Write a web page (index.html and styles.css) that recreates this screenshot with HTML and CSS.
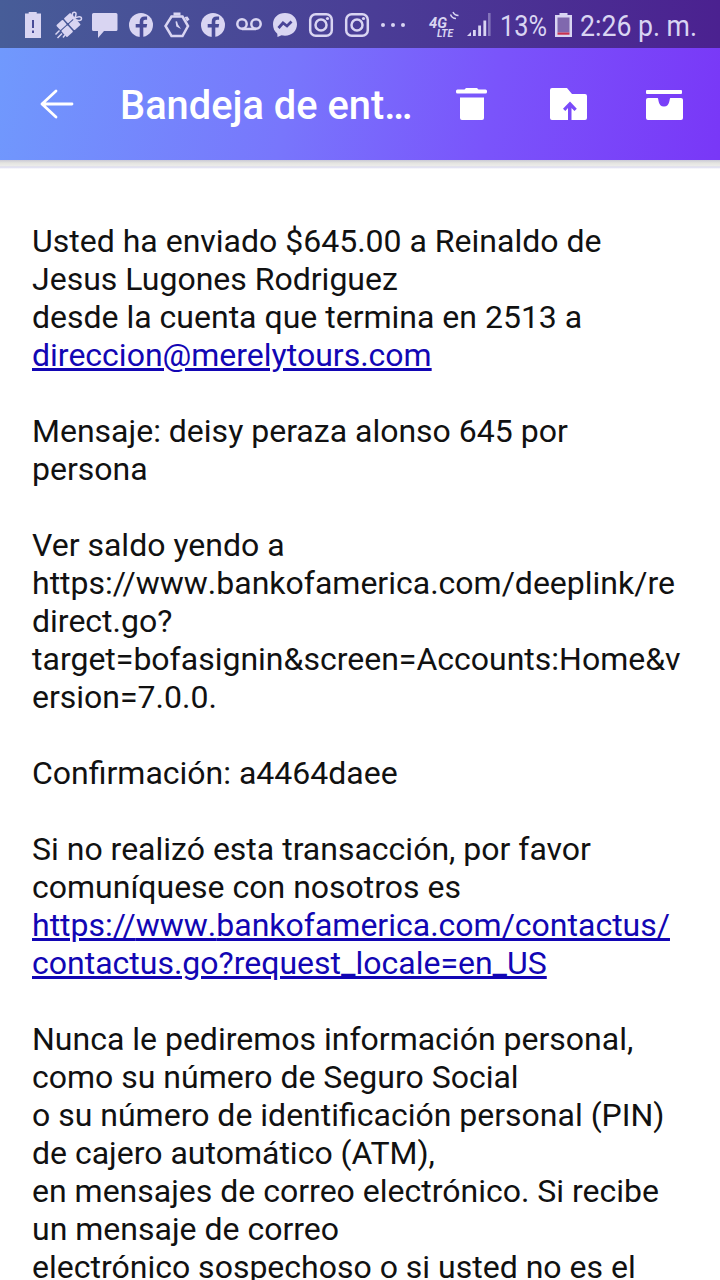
FILE: index.html
```html
<!DOCTYPE html>
<html lang="es">
<head>
  <meta charset="UTF-8">
  <meta name="viewport" content="width=device-width, initial-scale=1.0">
  <title>Bandeja de entrada</title>
  <link rel="stylesheet" href="styles.css">
</head>
<body>
  <svg class="defs" width="0" height="0">
    <symbol id="facebook" viewBox="0 0 36 48">
      <circle cx="18" cy="25" r="12" fill="currentColor"/>
      <path class="cut" d="M16.7 37.5V27.5h-4v-3.4h4v-2.4c0-3.5 1.8-5.2 5-5.2h2.4v3.3h-1.8c-1.5 0-2 .7-2 2v2.3h3.9l-.7 3.4h-3.2v10z"/>
    </symbol>
    <symbol id="instagram" viewBox="0 0 36 48">
      <rect class="line" x="7.2" y="14.2" width="21.6" height="21.6" rx="5.5"/>
      <circle class="line" cx="18" cy="25" r="5.5"/>
      <circle cx="24.5" cy="18.5" r="1.6" fill="currentColor"/>
    </symbol>
  </svg>

  <div class="status-bar">
    <div class="notifications">
      <svg viewBox="0 0 36 48">
        <path fill="currentColor" d="M10 13.5h3.7V12h8v1.5H26V38H10z"/>
        <path class="cut" d="M17 20h2v8h-2zM17 30.5h2v2.5h-2z"/>
      </svg>
      <svg viewBox="0 0 36 48">
        <g transform="rotate(-42 17.5 25)" fill="currentColor">
          <rect x="8" y="17" width="8.7" height="6.5" rx="1"/>
          <rect x="18.2" y="17" width="8.7" height="6.5" rx="1"/>
          <rect x="8" y="24.5" width="8.7" height="8.5" rx="1"/>
          <rect x="18.2" y="24.5" width="8.7" height="8.5" rx="1"/>
        </g>
        <path class="thin" d="M23 19c-2.500-3.500-2-6.800.3-6.800 2.500 0 2.200 3.500-.3 6.800zM23 19c3.500-3 7.500-3 7.500-.5 0 2.600-4 2.800-7.500.5zM4.500 34.500l4-4M6.500 38l4.500-4.500M12 37.500l2-2.500"/>
      </svg>
      <svg viewBox="0 0 36 48">
        <path fill="currentColor" d="M6.500 13h22.500q1.500 0 1.500 1.500v15q0 1.500-1.500 1.500H17l-6 7v-7H6.500Q5 31 5 29.500v-15Q5 13 6.500 13z"/>
      </svg>
      <svg><use href="#facebook"/></svg>
      <svg viewBox="0 0 36 48">
        <path class="line" d="M12.500 16.500h11l5.500 9.500-5.500 10h-11L6.500 26z"/>
        <path fill="currentColor" d="M14.500 12.500h7v3h-7zM25.500 17l3-.5 2 3-2.500 2zM16.500 21.500l1.500-.2 1 3.200 3 4.500-4.700-2.500z"/>
      </svg>
      <svg><use href="#facebook"/></svg>
      <svg viewBox="0 0 36 48">
        <circle class="line" cx="11" cy="24" r="4.7"/>
        <circle class="line" cx="25" cy="24" r="4.7"/>
        <path class="line" d="M11 29h14"/>
      </svg>
      <svg viewBox="0 0 36 48">
        <path fill="currentColor" d="M18 13c7 0 12 4.800 12 11.300S25 35.700 18 35.700c-1.300 0-2.400-.2-3.500-.5L10.500 37l-.2-3.300C7.500 31.500 6 28.300 6 24.300 6 17.800 11 13 18 13z"/>
        <path class="cut-line" d="M11.500 28l4.500-5 4 3 4.500-4.500"/>
      </svg>
      <svg><use href="#instagram"/></svg>
      <svg><use href="#instagram"/></svg>
      <svg viewBox="0 0 36 48">
        <g fill="currentColor">
          <circle cx="8" cy="25" r="2"/>
          <circle cx="18" cy="25" r="2"/>
          <circle cx="28" cy="25" r="2"/>
        </g>
      </svg>
    </div>
    <div class="system">
      <svg class="network" viewBox="0 0 36 48">
        <text class="net-4g" x="-1" y="28" textLength="18" lengthAdjust="spacingAndGlyphs">4G</text>
        <text class="net-lte" x="7" y="37" textLength="16" lengthAdjust="spacingAndGlyphs">LTE</text>
        <path class="thin" d="M20.500 14.500q1.500 4 5.500 4M23 12q1.500 3.500 5.500 3.500"/>
      </svg>
      <svg class="signal" viewBox="0 0 28 48">
        <path fill="currentColor" d="M1 36l4-4v4zM7 30h2.800v6H7zM12.200 25.500H15V36h-2.800zM17.400 20.500h2.800V36h-2.800z"/>
        <path fill="currentColor" opacity=".4" d="M22 13h2.600v23H22z"/>
      </svg>
      <svg class="percent" viewBox="0 0 60 48">
        <text class="clock" x="6" y="36" textLength="47" lengthAdjust="spacingAndGlyphs">13%</text>
      </svg>
      <svg class="battery" viewBox="0 0 20 48">
        <path fill="currentColor" d="M1 15h4.500v-2h8v2H18v22H1z"/>
        <path fill="#8068ae" d="M3.500 17.500h12v15h-12z"/>
        <path fill="#c8304f" d="M3.500 32.500h12v2.200h-12z"/>
      </svg>
      <svg class="time" viewBox="0 0 124 48">
        <text class="clock" x="4" y="36" textLength="117" lengthAdjust="spacingAndGlyphs">2:26 p. m.</text>
      </svg>
    </div>
  </div>

  <header class="toolbar">
    <svg class="back" viewBox="0 0 36 32">
      <path d="M33 16H3M17 3L3 16l14 13"/>
    </svg>
    <h1>Bandeja de ent…</h1>
    <div class="actions">
      <svg viewBox="0 0 40 40">
        <path d="M5.500 5.500h7L14 4h11l1.500 1.500h7Q35 5.500 35 7v1q0 1.500-1.500 1.500h-28Q4 9.500 4 8V7q0-1.500 1.500-1.500zM8 13.500h24V34q0 2-2 2H10q-2 0-2-2z"/>
      </svg>
      <svg viewBox="0 0 40 40">
        <path fill-rule="evenodd" d="M4 4h15l5 6h13q2 0 2 2v22q0 2-2 2H23.500V24l3 3 2.300-2.300L22 17.500l-7 7.200 2.300 2.300 2.700-3v12H4q-2 0-2-2V6q0-2 2-2z"/>
      </svg>
      <svg viewBox="0 0 40 40">
        <path d="M3 6h34q1 0 1 1v2q0 1-1 1H3q-1 0-1-1V7q0-1 1-1zM4 14h9.500c1.500 0 0 8.500 6.500 8.500s5-8.500 6.500-8.500H37q2 0 2 2v18q0 2-2 2H4q-2 0-2-2V16q0-2 2-2z"/>
      </svg>
    </div>
  </header>
  <div class="toolbar-shadow"></div>

  <main class="message">
    <p>Usted ha enviado $645.00 a Reinaldo de<br>
      Jesus Lugones Rodriguez<br>
      desde la cuenta que termina en 2513 a<br>
      <a href="#">direccion@merelytours.com</a></p>
    <p>Mensaje: deisy peraza alonso 645 por<br>
      persona</p>
    <p>Ver saldo yendo a<br>
      https://<span class="host">www.</span>bankofamerica.com/deeplink/re<br>
      direct.go?<br>
      target=bofasignin&amp;screen=Accounts:Home&amp;v<br>
      ersion=7.0.0.</p>
    <p>Confirmación: a4464daee</p>
    <p>Si no realizó esta transacción, por favor<br>
      comuníquese con nosotros es<br>
      <a href="#">https://<span class="host">www.</span>bankofamerica.com/contactus/<br>contactus.go?request_locale=en_US</a></p>
    <p>Nunca le pediremos información personal,<br>
      como su número de Seguro Social<br>
      o su número de identificación personal (PIN)<br>
      de cajero automático (ATM),<br>
      en mensajes de correo electrónico. Si recibe<br>
      un mensaje de correo<br>
      electrónico sospechoso o si usted no es el</p>
  </main>
</body>
</html>
```
FILE: styles.css
```css
* {
  box-sizing: border-box;
  margin: 0;
  padding: 0;
}
body {
  height: 1280px;
  overflow: hidden;
  background: #fff;
  font-family: Roboto, sans-serif;
  color: #111;
}
svg {
  display: block;
  flex-shrink: 0;
  overflow: visible;
}
.defs {
  position: absolute;
}
.status-bar {
  display: flex;
  justify-content: space-between;
  height: 48px;
  padding: 0 20px 0 15px;
  background: linear-gradient(to right, #475d98, #4a3d96 52%, #4b2190);
  color: #d9d5f2;
}
.notifications,
.system {
  display: flex;
}
.notifications svg {
  width: 36px;
  height: 48px;
}
.line {
  fill: none;
  stroke: currentColor;
  stroke-width: 2.5;
}
.thin {
  fill: none;
  stroke: currentColor;
  stroke-width: 1.5;
}
.cut {
  fill: #484b97;
}
.cut-line {
  fill: none;
  stroke: #4a4497;
  stroke-width: 2.8;
}
.system svg {
  height: 48px;
}
.network { width: 36px; }
.signal { width: 28px; }
.percent { width: 60px; }
.battery { width: 20px; margin-right: 2px; }
.time { width: 124px; }
.system text {
  fill: currentColor;
}
.net-4g {
  font-size: 14px;
  font-weight: 700;
  font-style: italic;
}
.net-lte {
  font-size: 10px;
  font-weight: 700;
  font-style: italic;
}
.clock {
  font-size: 30px;
}
.toolbar {
  display: flex;
  align-items: center;
  height: 112px;
  padding: 0 36px 0 39px;
  background: linear-gradient(100deg, #7099fd, #7876fc 40%, #7a54fb 68%, #7937f7);
  color: #fff;
}
.back {
  width: 36px;
  height: 32px;
  fill: none;
  stroke: #fff;
  stroke-width: 2.8;
  stroke-linecap: round;
  stroke-linejoin: round;
}
.toolbar h1 {
  margin-left: 45px;
  padding-top: 3px;
  width: 300px;
  font-size: 39.8px;
  font-weight: 500;
  line-height: 48px;
  white-space: nowrap;
}
.actions {
  display: flex;
  flex: 1;
  justify-content: space-between;
  margin-left: 32px;
}
.actions svg {
  width: 40px;
  height: 40px;
  fill: #fff;
}
.toolbar-shadow {
  height: 9px;
  background: linear-gradient(#c9c9d6, #e4e4e0 3px, #ececea 6px, #d8d8ee 7px, #fff 9px);
}
.message {
  padding: 53px 32px 0;
  font-size: 32px;
  line-height: 38px;
  white-space: nowrap;
}
.message p {
  margin-bottom: 38px;
}
.message a {
  color: #1206b4;
  text-decoration: underline;
  text-decoration-thickness: 3px;
  text-underline-offset: 2px;
}
.message .host {
  font-kerning: none;
}
```
